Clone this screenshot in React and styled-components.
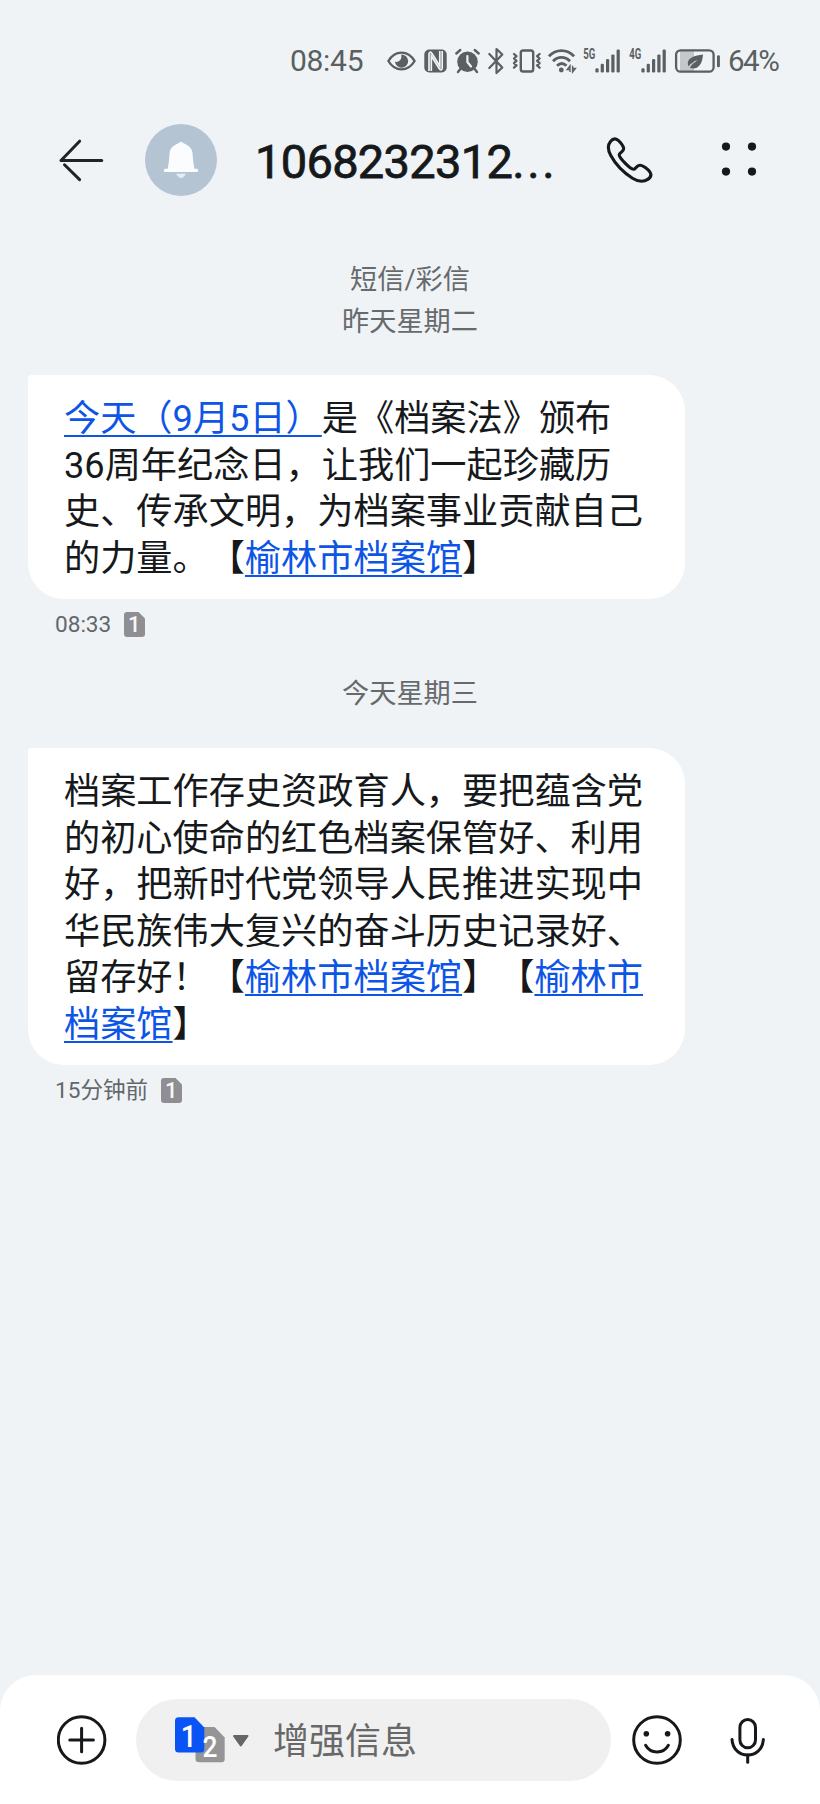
import React from 'react';
import styled, { createGlobalStyle } from 'styled-components';

const GlobalStyle = createGlobalStyle`
  body {
    margin: 0;
    background-color: #eff3f6;
  }

  * {
    box-sizing: border-box;
  }
`;

const Screen = styled.div`
  width: 820px;
  height: 1804px;
  display: flex;
  flex-direction: column;
  background-color: #eff3f6;
  color: #16191b;
  font-family: Roboto, 'Noto Sans CJK SC', sans-serif;
  text-spacing-trim: space-all;
  overflow: hidden;
`;

const StatusBar = styled.div`
  height: 122px;
  padding: 0 30px 0 290px;
  display: flex;
  align-items: center;
  color: #5a5f62;

  svg {
    display: block;
    flex: none;
    overflow: visible;
  }
`;

const Clock = styled.span`
  width: 97px;
  font-size: 30px;
  line-height: 36px;
  letter-spacing: -0.3px;
  white-space: nowrap;
`;

const StatusIcons = styled.div`
  width: 341px;
  display: flex;
  flex: none;
  align-items: center;
  gap: 8px;
`;

const Percent = styled.span`
  font-size: 29.5px;
  line-height: 36px;
  letter-spacing: -1.5px;
`;

const Header = styled.header`
  height: 76px;
  padding: 0 60px 0 58px;
  display: flex;
  align-items: center;

  svg {
    display: block;
    flex: none;
  }
`;

const Avatar = styled.div`
  width: 72px;
  height: 72px;
  margin: 0 38px 0 41px;
  border-radius: 50%;
  background-color: #b4c4d3;
  display: flex;
  align-items: center;
  justify-content: center;
`;

const Contact = styled.h1`
  width: 351px;
  margin: 4px 0 0;
  font-size: 47px;
  font-weight: 400;
  line-height: 56px;
  letter-spacing: -0.7px;
  white-space: nowrap;
  -webkit-text-stroke: 0.8px currentColor;
`;

const Dots = styled.span`
  letter-spacing: 2.6px;
`;

const MenuButton = styled.div`
  margin-left: 68px;
`;

const Thread = styled.main`
  flex: 1;
  display: flex;
  flex-direction: column;
  align-items: flex-start;
  padding: 61px 28px 0;
`;

const DateLabel = styled.div`
  align-self: center;
  margin-bottom: ${props => props.$bottom}px;
  color: #666a6d;
  font-size: 27.2px;
  line-height: 42px;
  text-align: center;
`;

const Bubble = styled.div`
  width: 657px;
  height: ${props => props.$height}px;
  padding: 21px 36px 0;
  border-radius: 4px 36px 36px 36px;
  background-color: #ffffff;
  font-size: 36.2px;
  line-height: 46.6px;
  white-space: nowrap;
`;

const BlueLink = styled.a`
  color: #0d55e6;
  text-decoration: underline;
  text-decoration-thickness: 2px;
  text-underline-offset: 4px;
  text-decoration-skip-ink: none;
`;

const Meta = styled.div`
  height: 25px;
  margin: 13px 0 ${props => props.$bottom || 0}px 27px;
  display: flex;
  align-items: center;
  gap: 13px;
  color: #63676a;
  font-size: 22.6px;
  line-height: 25px;
`;

const Composer = styled.footer`
  height: 129px;
  padding: 24px 50px 23px 57px;
  border-radius: 36px 36px 0 0;
  background-color: #ffffff;
  display: flex;
  align-items: center;

  svg {
    display: block;
    flex: none;
  }
`;

const InputPill = styled.div`
  width: 475px;
  height: 82px;
  margin: 0 21px 0 29px;
  padding-left: 39px;
  flex: none;
  border-radius: 41px;
  background-color: #f0f0f0;
  display: flex;
  align-items: center;
`;

const Placeholder = styled.span`
  margin: 4px 0 0 23px;
  color: #686868;
  font-size: 36px;
  line-height: 46px;
`;

const MicButton = styled.div`
  margin-left: 48px;
`;

const EyeIcon = () => (
  <svg width="29" height="26" viewBox="0 0 29 26" fill="none" stroke="currentColor" strokeWidth="2.4">
    <path d="M1.4 13C8 1.8 21 1.8 27.6 13C21 24.2 8 24.2 1.4 13Z" strokeLinejoin="round" />
    <path d="M14.2 6.6A6.6 6.6 0 1 1 8 13.5C10.5 15 15.5 12.5 14.2 6.6Z" fill="currentColor" stroke="none" />
  </svg>
);

const NfcIcon = () => (
  <svg width="23" height="26" viewBox="0 0 23 26">
    <rect x="0.3" y="1.5" width="22.4" height="23" rx="5" fill="currentColor" />
    <path
      d="M5 23V6.3C5 3.8 6.8 3.6 8 5.5L15.8 18V3M18.2 3V19.8C18.2 22.3 16.4 22.5 15.2 20.6L7.3 8V23"
      fill="none"
      stroke="#eff3f6"
      strokeWidth="1.7"
    />
  </svg>
);

const AlarmIcon = () => (
  <svg width="25" height="26" viewBox="0 0 25 26" fill="none" stroke="currentColor" strokeLinecap="round">
    <circle cx="12.5" cy="13.8" r="10.3" fill="currentColor" stroke="none" />
    <path d="M1.3 5.5L5.3 2M23.7 5.5L19.7 2" strokeWidth="2.4" />
    <path d="M5.3 21L3 24M19.7 21L22 24" strokeWidth="2.4" />
    <path d="M12.4 8V14L16 18.5" stroke="#eff3f6" strokeWidth="2.2" />
  </svg>
);

const BluetoothIcon = () => (
  <svg width="16" height="28" viewBox="0 0 16 28" fill="none" stroke="currentColor" strokeWidth="2.2" strokeLinejoin="round" strokeLinecap="round">
    <path d="M1.3 7L14.3 20.5L8.5 26V2L14.3 7.5L1.3 21" />
  </svg>
);

const VibrateIcon = () => (
  <svg width="29" height="26" viewBox="0 0 29 26" fill="none" stroke="currentColor" strokeLinejoin="round" strokeLinecap="round">
    <rect x="8.8" y="2.5" width="12.4" height="21" rx="2.3" strokeWidth="2.4" />
    <path d="M2 6L4.5 8.2L2 10.5L4.5 12.8L2 15.1L4.5 17.4L2 19.7" strokeWidth="2.3" />
    <path d="M27.6 6L25.1 8.2L27.6 10.5L25.1 12.8L27.6 15.1L25.1 17.4L27.6 19.7" strokeWidth="2.3" />
  </svg>
);

const WifiIcon = () => (
  <svg width="26" height="26" viewBox="0 0 26 26" fill="none" stroke="currentColor" strokeWidth="2.8">
    <path d="M-0.1 8.3C7 0.8 18 0.8 25.1 8.3" />
    <path d="M4 13.2C9 8.2 16 8.2 21 13.2" />
    <path d="M8 17.8C11 15 14.5 15 17.5 17.8" />
    <circle cx="12.3" cy="22" r="2.4" fill="currentColor" stroke="none" />
    <path d="M21 24V17.8L18.2 21.5H21M23.6 17.8V24L26.4 20.5H23.6" strokeWidth="1.4" />
  </svg>
);

const SignalIcon = ({ label }) => (
  <svg width="38" height="32" viewBox="0 -3 38 32" fill="currentColor">
    <text x="0.3" y="11.3" fontFamily="Roboto" fontSize="14" fontWeight="700" textLength="12" lengthAdjust="spacingAndGlyphs">
      {label}
    </text>
    <rect x="12.4" y="20.2" width="3.2" height="4.3" rx="1.2" />
    <rect x="17.7" y="15.8" width="3.2" height="8.7" rx="1.2" />
    <rect x="23" y="11" width="3.2" height="13.5" rx="1.2" />
    <rect x="28.3" y="6.4" width="3.2" height="18.1" rx="1.2" />
    <rect x="33.6" y="1.5" width="3.2" height="23" rx="1.2" />
  </svg>
);

const BatteryIcon = () => (
  <svg width="46" height="26" viewBox="0 0 46 26">
    <path d="M5 3H19V23H5Z" fill="#c4c8ca" />
    <rect x="1.1" y="2.3" width="37.5" height="21.4" rx="4.5" fill="none" stroke="currentColor" strokeWidth="2.3" />
    <rect x="42" y="7.2" width="2.9" height="12" rx="1.3" fill="currentColor" />
    <path d="M28 6.5C19.5 7.6 12.8 10 12.8 15.3C12.8 16.5 13 17.5 13.5 18.2C16.5 15 19 13.3 22.5 12C19 14.5 16.5 17 14.8 20C22 22 27.2 18 28 6.5Z" fill="currentColor" />
  </svg>
);

const BackIcon = () => (
  <svg width="46" height="44" viewBox="0 0 46 44" fill="none" stroke="#202427" strokeWidth="3" strokeLinecap="round" strokeLinejoin="round">
    <path d="M43.8 22.5H3L21.6 3.2" />
    <path d="M6.5 26.8L21.6 41.6" />
  </svg>
);

const BellIcon = () => (
  <svg width="36" height="38" viewBox="0 0 36 38" fill="#fbfcfe">
    <path d="M15.5 2.2Q18 -0.8 20.5 2.2C25.5 4.2 29 7 29.5 12C30 18 30.5 24 31.5 27.8H33.8Q35.2 27.8 35.2 29.4T33.8 31H2.2Q0.8 31 0.8 29.4T2.2 27.8H4.7C5.6 24 6.2 18 6.6 12C7 7 10.5 4.2 15.5 2.2Z" />
    <path d="M13.2 32.8H22.8C21.6 35.5 20 37 18 37S14.4 35.5 13.2 32.8Z" fill="#e6ecf2" />
  </svg>
);

const PhoneIcon = () => (
  <svg width="47" height="48" viewBox="0 0 47 48" fill="none" stroke="#16191b" strokeWidth="3.1" strokeLinejoin="round">
    <path d="M4.5 5.5C7 2.5 9.2 2 12 4.2C14.5 6.4 17 9.5 17.6 12.2C18.4 15.6 13 16.8 13.2 18.8C13.4 22 24 33 27.4 33.3C29.8 33.5 30 29.4 34 29.2C36.8 29 42 33.4 43.9 36C45.8 38.8 44.5 41.5 41.7 43.4C37.5 46.2 32.3 45.8 26.5 42.2C18.5 37.2 9.5 28.2 4.8 19.5C1.8 14 1.2 9.5 4.5 5.5Z" />
  </svg>
);

const MoreIcon = () => (
  <svg width="36" height="36" viewBox="0 0 36 36" fill="#16191b">
    <circle cx="5" cy="4.6" r="4.1" />
    <circle cx="31" cy="4.6" r="4.1" />
    <circle cx="5" cy="29.6" r="4.1" />
    <circle cx="31" cy="29.6" r="4.1" />
  </svg>
);

const SimBadge = () => (
  <svg width="21" height="25" viewBox="0 0 21 25">
    <path d="M3 0H14.5L21 6.5V22Q21 25 18 25H3Q0 25 0 22V3Q0 0 3 0Z" fill="#8e8e93" />
    <text x="10.3" y="20.3" textAnchor="middle" fontFamily="Roboto" fontSize="22" fontWeight="500" fill="#f7f7f7">1</text>
  </svg>
);

// Active SIM drawn over the second one, followed by the dropdown arrow
const SimPicker = () => (
  <svg width="75" height="46" viewBox="0 0 75 46">
    <path d="M23.5 10H39.5L49.7 20.5V42Q49.7 45.3 46.5 45.3H24Q20.5 45.3 20.5 42V13Q20.5 10 23.5 10Z" fill="#959597" />
    <path d="M3.5 0.3H19.5L29.3 10.5V32Q29.3 35.5 26 35.5H3.5Q0 35.5 0 32V3.8Q0 0.3 3.5 0.3Z" fill="#0a53f5" />
    <text x="13.8" y="29.8" textAnchor="middle" fontFamily="Roboto" fontSize="32" fontWeight="500" fill="#ffffff" textLength="16" lengthAdjust="spacingAndGlyphs">1</text>
    <text x="35" y="40" textAnchor="middle" fontFamily="Roboto" fontSize="30" fontWeight="500" fill="#ffffff" textLength="15" lengthAdjust="spacingAndGlyphs">2</text>
    <path d="M59 19H72.5L65.8 28.5Z" fill="#666666" stroke="#666666" strokeWidth="2" strokeLinejoin="round" />
  </svg>
);

const PlusIcon = () => (
  <svg width="50" height="50" viewBox="0 0 50 50" fill="none" stroke="#16191b" strokeWidth="3" strokeLinecap="round">
    <circle cx="24.6" cy="25" r="23.3" />
    <path d="M24.6 13.2V36.8M12.8 25H36.4" />
  </svg>
);

const SmileIcon = () => (
  <svg width="50" height="50" viewBox="0 0 50 50" fill="none" stroke="#16191b" strokeWidth="3" strokeLinecap="round">
    <circle cx="25" cy="25" r="23.3" />
    <circle cx="14.3" cy="18.8" r="2.8" fill="#16191b" stroke="none" />
    <circle cx="35.6" cy="18.8" r="2.8" fill="#16191b" stroke="none" />
    <path d="M13.6 30.3C18.5 39.2 31.5 39.2 36.4 30.3" />
  </svg>
);

const MicIcon = () => (
  <svg width="36" height="48" viewBox="0 0 36 48" fill="none" stroke="#16191b" strokeWidth="3" strokeLinecap="round">
    <rect x="9.9" y="3.6" width="15.6" height="28.2" rx="7.8" />
    <path d="M2 23.4C3.2 44.3 32.2 44.3 33.4 23.4" />
    <path d="M17.7 39V46.2" />
  </svg>
);

const App = () => {
  return (
    <>
      <GlobalStyle />
      <Screen>
        <StatusBar>
          <Clock>08:45</Clock>
          <StatusIcons>
            <EyeIcon />
            <NfcIcon />
            <AlarmIcon />
            <BluetoothIcon />
            <VibrateIcon />
            <WifiIcon />
            <SignalIcon label="5G" />
            <SignalIcon label="4G" />
            <BatteryIcon />
          </StatusIcons>
          <Percent>64%</Percent>
        </StatusBar>
        <Header>
          <BackIcon />
          <Avatar>
            <BellIcon />
          </Avatar>
          <Contact>
            1068232312<Dots>...</Dots>
          </Contact>
          <PhoneIcon />
          <MenuButton>
            <MoreIcon />
          </MenuButton>
        </Header>

        <Thread>
          <DateLabel $bottom={0}>短信/彩信</DateLabel>
          <DateLabel $bottom={32}>昨天星期二</DateLabel>
          <Bubble $height={224}>
            <BlueLink>今天（9月5日）</BlueLink>是《档案法》颁布<br />
            36周年纪念日，让我们一起珍藏历<br />
            史、传承文明，为档案事业贡献自己<br />
            的力量。【<BlueLink>榆林市档案馆</BlueLink>】
          </Bubble>
          <Meta $bottom={36}>
            08:33
            <SimBadge />
          </Meta>
          <DateLabel $bottom={33}>今天星期三</DateLabel>
          <Bubble $height={317}>
            档案工作存史资政育人，要把蕴含党<br />
            的初心使命的红色档案保管好、利用<br />
            好，把新时代党领导人民推进实现中<br />
            华民族伟大复兴的奋斗历史记录好、<br />
            留存好！【<BlueLink>榆林市档案馆</BlueLink>】【<BlueLink>榆林市<br />
            档案馆</BlueLink>】
          </Bubble>
          <Meta>
            15分钟前
            <SimBadge />
          </Meta>
        </Thread>

        <Composer>
          <PlusIcon />
          <InputPill>
            <SimPicker />
            <Placeholder>增强信息</Placeholder>
          </InputPill>
          <SmileIcon />
          <MicButton>
            <MicIcon />
          </MicButton>
        </Composer>
      </Screen>
    </>
  );
};

export default App;
